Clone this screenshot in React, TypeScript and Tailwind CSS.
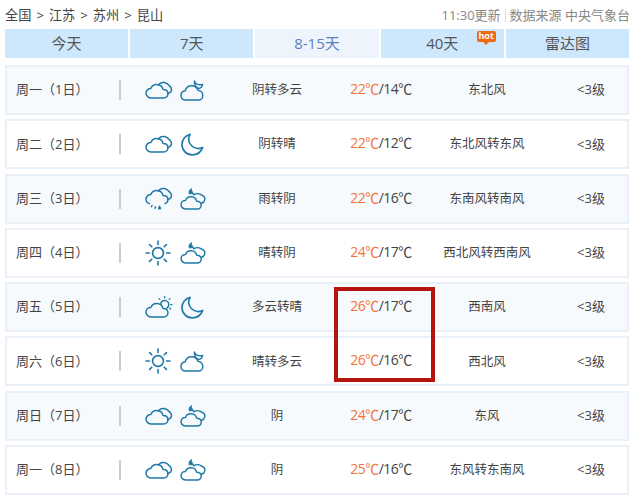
import React from 'react';

const stroke = '#1f78a8';

const backCloud = 'M13.5 4.2 C14.6 2.2 17 1 19.6 1.6 C22 2.2 23.6 3.6 24.8 5.2 C26.6 6.6 27 9.4 25.6 11 C25 11.8 24 12.2 22.6 12.4';
const frontCloud = 'M6.6 17 C3.4 17 1 15 1 12.2 C1 9.4 3.2 7.6 5.8 7.6 C6.8 5 9.2 3.4 12 3.6 C15 3.8 17.4 5.6 18 8.4 C20.8 8.2 23 10 23 12.6 C23 15.2 21 17 18.6 17 Z';

const Cloudy = () => (
  <svg width="28" height="18" viewBox="0 0 28 18" fill="none" stroke={stroke} strokeWidth="1.5" strokeLinejoin="round" strokeLinecap="round">
    <path d={backCloud} />
    <path d={frontCloud} />
  </svg>
);

const Rain = () => (
  <svg width="28" height="24" viewBox="0 0 28 24" fill="none" stroke={stroke} strokeWidth="1.5" strokeLinecap="round">
    <path d={backCloud} />
    <path d="M4.5 16.6 C2.4 16 1 14.4 1 12.2 C1 9.4 3.2 7.6 5.8 7.6 C6.8 5 9.2 3.4 12 3.6 C15 3.8 17.4 5.6 18 8.4 C20.8 8.2 23 10 23 12.6 C23 14.6 21.8 16 20 16.6" />
    <path d="M7 18.5 L6.4 19.6 M10.5 20 L10 21.2" />
    <path d="M14.5 18.2 C15.6 19.8 16.2 20.6 16.2 21.4 C16.2 23 13 23 13 21.4 C13 20.6 13.6 19.8 14.5 18.2 Z" fill={stroke} stroke="none" />
  </svg>
);

const Sun = () => (
  <svg width="26" height="26" viewBox="0 0 26 26" fill="none" stroke={stroke} strokeWidth="1.6" strokeLinecap="round">
    <circle cx="13" cy="13" r="5.4" />
    <path d="M13 1 V4.4 M13 21.6 V25 M1 13 H4.4 M21.6 13 H25 M4.6 4.6 L6.8 6.8 M19.2 19.2 L21.4 21.4 M4.6 21.4 L6.8 19.2 M19.2 6.8 L21.4 4.6" />
  </svg>
);

const Moon = () => (
  <svg className="ml-[1px]" width="23" height="23" viewBox="0 0 24 24" fill="none" stroke={stroke} strokeWidth="1.7" strokeLinejoin="round">
    <path d="M9.6 1.4 C4.6 2.6 1 6.8 1 12 C1 18 5.8 22.8 11.8 22.8 C16.8 22.8 21 19.6 22.6 15 C20.8 16 19 16.4 17.2 16.2 C12.4 15.8 8.6 12 8 7.2 C7.8 5.4 8.4 3.2 9.6 1.4 Z" />
  </svg>
);

// 多云 night icon, crescent peeking over the cloud
const CloudMoon = () => (
  <svg width="24" height="21" viewBox="0 0 24 21" fill="none" stroke={stroke} strokeWidth="1.5" strokeLinejoin="round" strokeLinecap="round">
    <path d="M14.5 1 C14.8 3.6 17.6 5.6 22.6 4.6 C22.2 6.4 21.2 7.8 19.4 8.4 C16.6 8.4 14 5.4 14.5 1 Z" />
    <path d="M5.4 20 C2.8 20 1 18 1 15.6 C1 13 2.8 11.2 5 11 C6 7.8 8.6 5.8 11.4 5.8 C14.6 5.8 17.2 8 18.2 10.6 C20.8 10.8 22.8 12.8 22.8 15.4 C22.8 18 20.8 20 18.4 20 Z" />
  </svg>
);

// 阴 night icon: solid moon tip behind a double cloud
const OvercastNight = () => (
  <svg width="26" height="22" viewBox="0 0 28 24" fill="none" stroke={stroke} strokeWidth="1.6" strokeLinejoin="round" strokeLinecap="round">
    <path d="M12 1 C9.8 2 9.2 4.4 10 6.6 C11.8 6 13.8 6.2 15.6 7 C13.8 5.6 12.4 3.6 12 1 Z" fill={stroke} strokeWidth="1" />
    <path d="M15 7.4 C17 6 20.6 6 23 7.6 C25.6 8.4 27.2 10.6 26.8 13 C26.4 15 25 16.2 23.4 16.6" />
    <path d="M6.6 23 C3.4 23 1 21 1 18.2 C1 15.4 3.2 13.6 5.8 13.6 C6.8 11 9.2 9.4 12 9.6 C15 9.8 17.4 11.6 18 14.4 C20.8 14.2 23 16 23 18.6 C23 21.2 21 23 18.6 23 Z" />
  </svg>
);

const PartlySun = () => (
  <svg width="28" height="22" viewBox="0 0 28 22" fill="none" stroke={stroke} strokeWidth="1.5" strokeLinejoin="round" strokeLinecap="round">
    <path d="M15.5 8.2 C16 5.8 17.8 4.4 19.6 4.4 C22 4.4 23.8 6.4 23.8 8.6 C23.8 10 23 11.4 22 12" />
    <path d="M19.6 0.6 V1.8 M14 2.6 L14.8 3.4 M25 2.6 L24.2 3.4 M27 8.6 H25.8 M25.6 13 L24.8 12.2" strokeWidth="1.3" />
    <path d="M6.6 21 C3.4 21 1 19 1 16.2 C1 13.4 3.2 11.6 5.8 11.6 C6.8 9 9.2 7.4 12 7.6 C15 7.8 17.4 9.6 18 12.4 C20.8 12.2 23 14 23 16.6 C23 19.2 21 21 18.6 21 Z" />
  </svg>
);

const rows = [
  { d: '周一（1日）', a: Cloudy, b: CloudMoon, w: '阴转多云', hi: '22℃', lo: '14℃', f: '东北风' },
  { d: '周二（2日）', a: Cloudy, b: Moon, w: '阴转晴', hi: '22℃', lo: '12℃', f: '东北风转东风' },
  { d: '周三（3日）', a: Rain, b: OvercastNight, w: '雨转阴', hi: '22℃', lo: '16℃', f: '东南风转南风' },
  { d: '周四（4日）', a: Sun, b: OvercastNight, w: '晴转阴', hi: '24℃', lo: '17℃', f: '西北风转西南风' },
  { d: '周五（5日）', a: PartlySun, b: Moon, w: '多云转晴', hi: '26℃', lo: '17℃', f: '西南风' },
  { d: '周六（6日）', a: Sun, b: CloudMoon, w: '晴转多云', hi: '26℃', lo: '16℃', f: '西北风' },
  { d: '周日（7日）', a: Cloudy, b: OvercastNight, w: '阴', hi: '24℃', lo: '17℃', f: '东风' },
  { d: '周一（8日）', a: Cloudy, b: OvercastNight, w: '阴', hi: '25℃', lo: '16℃', f: '东风转东南风' },
];

const tabs = ['今天', '7天', '8-15天', '40天', '雷达图'];
const crumbs = ['全国', '江苏', '苏州', '昆山'];

export default function App() {
  return (
    <div className="relative w-[634px] h-[500px] overflow-hidden bg-white text-[#444] text-[13px] font-['Open_Sans','Noto_Sans_CJK_SC',sans-serif]">
      {/* Breadcrumb */}
      <div className="flex items-center justify-between h-[29px] pl-[5px] pr-[4px] pt-[2px]">
        <div className="flex items-center gap-[5px] text-[13.2px] text-[#444]">
          {crumbs.map((c, i) => (
            <React.Fragment key={c}>
              {i > 0 && <span>&gt;</span>}
              <span>{c}</span>
            </React.Fragment>
          ))}
        </div>
        <div className="flex items-center text-[13px] text-[#888]">
          <span>11:30更新</span>
          <span className="mx-[4px] h-[13px] w-px bg-[#ddd]" />
          <span>数据来源 中央气象台</span>
        </div>
      </div>

      {/* Tabs */}
      <div className="flex gap-[2px] px-[5px] h-[29px]">
        {tabs.map((t, i) => (
          <div
            key={t}
            className={`relative flex-1 flex items-center justify-center text-[15px] ${i === 2 ? 'bg-[#eef4fb] text-[#5b7fc4]' : 'bg-[#cde8fd] text-[#555]'}`}
          >
            {t}
            {i === 3 && (
              <span className="absolute left-[96px] top-[2px] h-[11px] w-[19px] rounded-[2px] bg-[#ee6a10] text-white text-[9px] font-bold leading-[10px] text-center">
                hot
                <span className="absolute left-[6px] top-[11px] border-x-[3px] border-t-[3px] border-x-transparent border-t-[#ee6a10]" />
              </span>
            )}
          </div>
        ))}
      </div>

      {/* Forecast rows */}
      <div className="flex flex-col gap-[4.3px] px-[5px] mt-[7px]">
        {rows.map((r, i) => {
          const A = r.a;
          const B = r.b;
          return (
            <div
              key={i}
              className={`flex items-center h-[50px] border-2 border-[#e9f0f8] ${i % 2 === 0 ? 'bg-[#f7fafd]' : 'bg-white'}`}
            >
              <div className="w-[112px] pl-[9px] whitespace-nowrap">{r.d}</div>
              <div className="h-[20px] w-[2px] bg-[#ccc]" />
              <div className="w-[24px]" />
              <div className="w-[35px] flex justify-start"><A /></div>
              <div className="w-[37px] flex justify-start"><B /></div>
              <div className="w-[120px] pt-[1px] text-center text-[12.5px]">{r.w}</div>
              <div className="w-[90px] ml-[-1px] pb-[3px] text-center text-[14px] tracking-[-0.5px]">
                <span className="text-[#f4733a]">{r.hi}</span>/{r.lo}
              </div>
              <div className="w-[122px] pt-[1px] text-center text-[12.5px] whitespace-nowrap">{r.f}</div>
              <div className="w-[72px] ml-[7px] text-center">&lt;3级</div>
            </div>
          );
        })}
      </div>

      {/* Red highlight */}
      <div className="absolute left-[334px] top-[287px] w-[101px] h-[95px] border-[4px] border-[#b5130d]" />
    </div>
  );
}
